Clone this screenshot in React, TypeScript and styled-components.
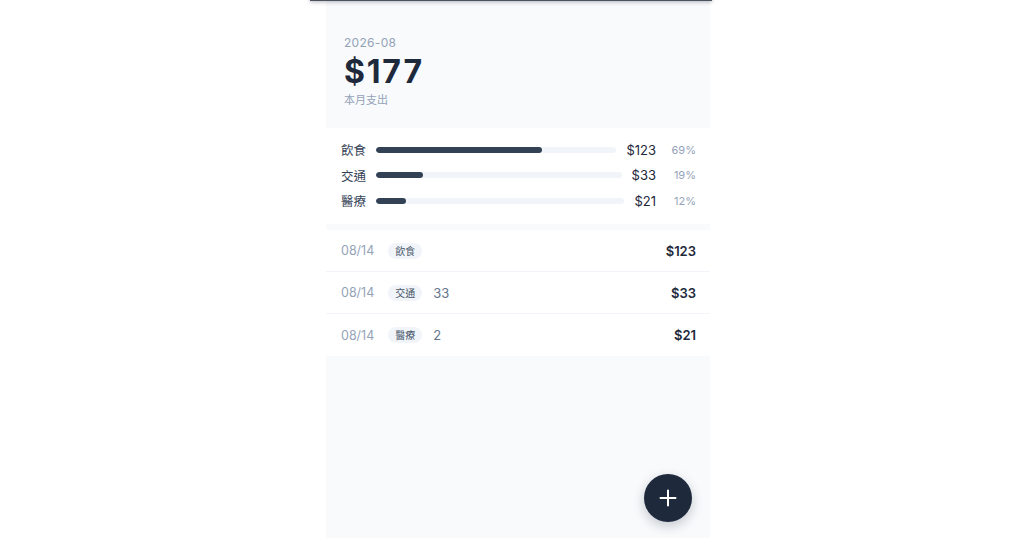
import React from "react";
import styled, { createGlobalStyle } from "styled-components";

const Global = createGlobalStyle`
  html, body { margin: 0; padding: 0; background: #ffffff; }
  body { font-family: Inter, "Noto Sans CJK TC", sans-serif; -webkit-font-smoothing: antialiased; }
  * { box-sizing: border-box; }
`;

const TopShade = styled.div`
  position: fixed;
  top: -40px;
  left: 310px;
  width: 402px;
  height: 41px;
  background: #4b5260;
  box-shadow: 0 1px 4px rgba(15, 23, 42, 0.3);
  z-index: 5;
`;

const Page = styled.div`
  display: flex;
  justify-content: flex-start;
  padding-left: 326px;
`;

const Column = styled.main`
  width: 384px;
  min-height: 538px;
  background: #f8fafc;
  display: flex;
  flex-direction: column;
  position: relative;
`;

const Header = styled.header`
  padding: 34px 18px 20px;
  display: flex;
  flex-direction: column;
`;

const Month = styled.div`
  font-size: 12px;
  line-height: 18px;
  letter-spacing: 0.3px;
  color: #94a3b8;
`;

const Total = styled.div`
  font-size: 32px;
  line-height: 40px;
  font-weight: 700;
  color: #1e293b;
  letter-spacing: 1.8px;
`;

const Caption = styled.div`
  font-size: 11px;
  line-height: 16px;
  color: #94a3b8;
`;

const StatsCard = styled.section`
  background: #ffffff;
  padding: 12px 14px 14px 15px;
  display: flex;
  flex-direction: column;
  gap: 6.5px;
`;

const StatRow = styled.div`
  display: grid;
  grid-template-columns: auto 1fr auto 30px;
  align-items: center;
  column-gap: 10px;
  height: 19px;
`;

const StatLabel = styled.span`
  font-size: 12.5px;
  color: #334155;
`;

const Track = styled.div`
  height: 6px;
  border-radius: 3px;
  background: #f1f5f9;
  overflow: hidden;
`;

const Fill = styled.div`
  height: 100%;
  border-radius: 3px;
  background: #334155;
`;

const StatAmount = styled.span`
  font-size: 13px;
  color: #1e293b;
`;

const StatPct = styled.span`
  font-size: 11px;
  color: #94a3b8;
  text-align: right;
`;

const List = styled.section`
  margin-top: 6px;
  background: #ffffff;
  display: flex;
  flex-direction: column;
`;

const Row = styled.div<{ $last?: boolean }>`
  height: 42px;
  display: flex;
  align-items: center;
  padding: 0 14px 0 15px;
  border-bottom: ${(p) => (p.$last ? "none" : "1px solid #f1f5f9")};
`;

const DateText = styled.span`
  font-size: 12.5px;
  color: #94a3b8;
  margin-right: 14px;
`;

const Tag = styled.span`
  font-size: 10px;
  line-height: 16px;
  padding: 0 7px;
  border-radius: 8px;
  background: #f1f5f9;
  color: #475569;
  margin-right: 11px;
`;

const Note = styled.span`
  font-size: 13px;
  color: #64748b;
  flex: 1;
`;

const RowAmount = styled.span`
  margin-left: auto;
  font-size: 13px;
  font-weight: 600;
  color: #1e293b;
`;

const Fab = styled.button`
  position: absolute;
  right: 18px;
  bottom: 16px;
  width: 48px;
  height: 48px;
  border-radius: 50%;
  border: none;
  background: #1e293b;
  display: flex;
  align-items: center;
  justify-content: center;
  box-shadow: 0 4px 12px rgba(15, 23, 42, 0.22);
  padding: 0;
`;

const stats = [
  { label: "飲食", amount: "$123", pct: 69 },
  { label: "交通", amount: "$33", pct: 19 },
  { label: "醫療", amount: "$21", pct: 12 },
];

const items = [
  { date: "08/14", tag: "飲食", note: "", amount: "$123" },
  { date: "08/14", tag: "交通", note: "33", amount: "$33" },
  { date: "08/14", tag: "醫療", note: "2", amount: "$21" },
];

export default function App() {
  return (
    <>
      <Global />
      <TopShade />
      <Page>
        <Column>
          <Header>
            <Month>2026-08</Month>
            <Total>$177</Total>
            <Caption>本月支出</Caption>
          </Header>
          <StatsCard>
            {stats.map((s) => (
              <StatRow key={s.label}>
                <StatLabel>{s.label}</StatLabel>
                <Track>
                  <Fill style={{ width: `${s.pct}%` }} />
                </Track>
                <StatAmount>{s.amount}</StatAmount>
                <StatPct>{s.pct}%</StatPct>
              </StatRow>
            ))}
          </StatsCard>
          <List>
            {items.map((it, i) => (
              <Row key={i} $last={i === items.length - 1}>
                <DateText>{it.date}</DateText>
                <Tag>{it.tag}</Tag>
                <Note>{it.note}</Note>
                <RowAmount>{it.amount}</RowAmount>
              </Row>
            ))}
          </List>
          <Fab aria-label="add">
            <svg width="18" height="18" viewBox="0 0 18 18" fill="none">
              <path d="M9 1.5v15M1.5 9h15" stroke="#ffffff" strokeWidth="2" strokeLinecap="round" />
            </svg>
          </Fab>
        </Column>
      </Page>
    </>
  );
}
